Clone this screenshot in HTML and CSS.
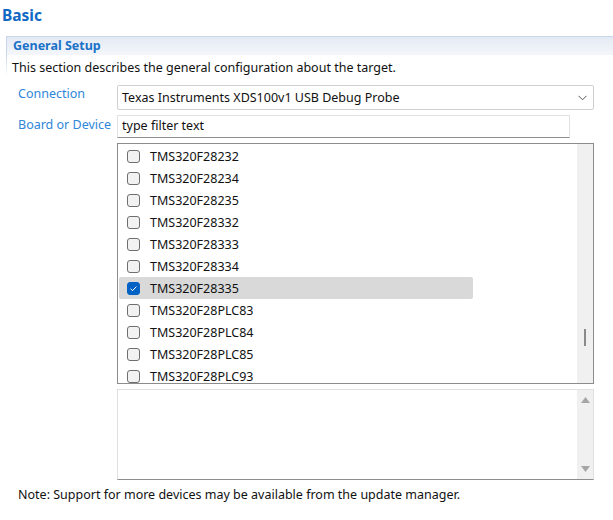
FILE: index.html
```html
<!DOCTYPE html>
<html>
<head>
<meta charset="utf-8">
<link rel="stylesheet" href="styles.css">
</head>
<body>
<h1 class="title">Basic</h1>
<section class="group">
  <div class="group-head">General Setup</div>
  <p class="desc">This section describes the general configuration about the target.</p>
  <div class="form">
    <div class="lbl lbl-conn">Connection</div>
    <div class="select">
      <span>Texas Instruments XDS100v1 USB Debug Probe</span>
      <svg class="chev" width="9" height="6" viewBox="0 0 9 6"><path d="M0.5 0.8 L4.5 4.8 L8.5 0.8" fill="none" stroke="#555" stroke-width="1"/></svg>
    </div>
    <div class="lbl lbl-board">Board or Device</div>
    <div class="col">
      <div class="filter">type filter text</div>
      <div class="list">
        <div class="rows">
          <div class="row"><span class="cb"></span>TMS320F28232</div>
          <div class="row"><span class="cb"></span>TMS320F28234</div>
          <div class="row"><span class="cb"></span>TMS320F28235</div>
          <div class="row"><span class="cb"></span>TMS320F28332</div>
          <div class="row"><span class="cb"></span>TMS320F28333</div>
          <div class="row"><span class="cb"></span>TMS320F28334</div>
          <div class="row sel"><span class="cb on"><svg width="13" height="13" viewBox="0 0 13 13"><path d="M3.6 6.8 L5.6 8.6 L9.4 4.6" fill="none" stroke="#fff" stroke-width="1"/></svg></span>TMS320F28335</div>
          <div class="row"><span class="cb"></span>TMS320F28PLC83</div>
          <div class="row"><span class="cb"></span>TMS320F28PLC84</div>
          <div class="row"><span class="cb"></span>TMS320F28PLC85</div>
          <div class="row"><span class="cb"></span>TMS320F28PLC93</div>
        </div>
        <div class="vscroll"><span class="thumb"></span></div>
      </div>
      <div class="details">
        <div class="details-body"></div>
        <div class="vscroll2">
          <svg width="9" height="6" viewBox="0 0 9 6"><path d="M4.5 0 L9 6 L0 6 Z" fill="#a6a6a6"/></svg>
          <svg width="9" height="6" viewBox="0 0 9 6"><path d="M0 0 L9 0 L4.5 6 Z" fill="#a6a6a6"/></svg>
        </div>
      </div>
    </div>
  </div>
  <p class="note">Note: Support for more devices may be available from the update manager.</p>
</section>
</body>
</html>
```

FILE: styles.css
```css
html, body {
  margin: 0;
  padding: 0;
  background: #ffffff;
  font-family: "Noto Sans", "Open Sans", sans-serif;
  font-size: 12.5px;
  color: #111;
  width: 613px;
  height: 520px;
  overflow: hidden;
}

.title {
  margin: 0;
  height: 36px;
  line-height: 31px;
  padding-left: 2px;
  font-size: 15.5px;
  font-weight: bold;
  color: #1068c4;
}

.group {
  margin-left: 6px;
  border-top: 1px solid #c8d6ec;
  border-left: 1px solid #dbe3ef;
  border-image: linear-gradient(to bottom, #c8d6ec 0, #c8d6ec 20px, #ffffff 40px) 1;
  border-right: 0;
  border-bottom: 0;
}

.group-head {
  height: 18px;
  line-height: 18px;
  padding-left: 6px;
  font-weight: bold;
  color: #1a72c8;
  background: linear-gradient(to bottom, #e4eaf5, #f4f6fa);
}

.desc {
  margin: 4px 0 0 5px;
  line-height: 18px;
}

.form {
  display: grid;
  grid-template-columns: 99px 477px;
  grid-template-rows: 25px auto;
  row-gap: 5px;
  padding-left: 11px;
  margin-top: 8px;
}

.lbl {
  color: #2d86d8;
  line-height: 18px;
  white-space: nowrap;
}
.lbl-conn { padding-top: 0px; }
.lbl-board { padding-top: 1px; }

.select {
  box-sizing: border-box;
  height: 25px;
  border: 1px solid #d0d0d0;
  border-radius: 2px;
  display: flex;
  align-items: center;
  justify-content: space-between;
  padding: 0 6px 0 4px;
  color: #111;
}
.chev { display: block; }

.col {
  display: flex;
  flex-direction: column;
}

.filter {
  box-sizing: border-box;
  width: 453px;
  height: 23px;
  border: 1px solid #e2e2e2;
  border-bottom-color: #8e8e8e;
  padding-left: 4px;
  line-height: 20px;
}

.list {
  box-sizing: border-box;
  margin-top: 5px;
  height: 241px;
  border: 1px solid #8c8c8c;
  display: flex;
  overflow: hidden;
}

.rows {
  flex: 1;
  padding-top: 1px;
}

.row {
  height: 22px;
  display: flex;
  align-items: center;
  margin-left: 1px;
  padding-left: 8px;
  width: 346px;
  white-space: nowrap;
}
.row.sel {
  background: #d9d9d9;
  border-radius: 2px;
}

.cb {
  box-sizing: border-box;
  width: 13px;
  height: 13px;
  border: 1px solid #6e6e6e;
  border-radius: 3px;
  background: #f2f2f2;
  margin-right: 10px;
  flex: none;
  display: flex;
}
.cb.on {
  background: #0062c4;
  border-color: #0062c4;
}
.cb.on svg { margin: -1px; }

.vscroll {
  width: 16px;
  background: #f0f0f0;
  position: relative;
  flex: none;
}
.thumb {
  position: absolute;
  left: 7px;
  top: 185px;
  width: 2px;
  height: 17px;
  background: #8a8a8a;
}

.details {
  box-sizing: border-box;
  margin-top: 5px;
  height: 91px;
  border: 1px solid #e0e0e0;
  border-bottom-color: #8e8e8e;
  display: flex;
}
.details-body { flex: 1; }
.vscroll2 {
  width: 16px;
  background: #f0f0f0;
  display: flex;
  flex-direction: column;
  justify-content: space-between;
  align-items: center;
  padding: 7px 0 7px;
}
.vscroll2 svg { display: block; }

.note {
  margin: 6px 0 0 11px;
  line-height: 18px;
}
```
